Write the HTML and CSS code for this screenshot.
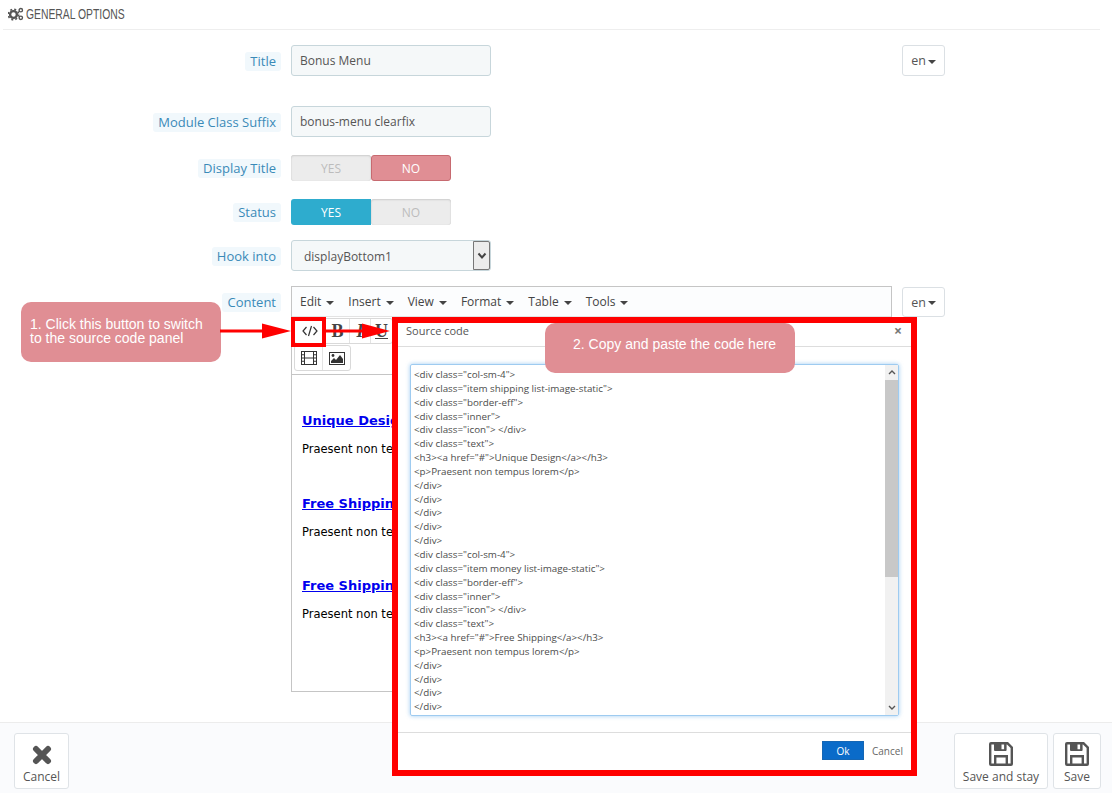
FILE: index.html
```html
<!DOCTYPE html>
<html lang="en">
<head>
<meta charset="utf-8">
<title>General options</title>
<link rel="stylesheet" href="styles.css">
</head>
<body>
<div class="page">
  <header class="panel-head">
    <svg class="gears" viewBox="0 0 16 14" width="16" height="14"><circle cx="5.5" cy="7.5" r="3.4" fill="none" stroke="#555" stroke-width="2.4"/><circle cx="5.5" cy="7.5" r="5.2" fill="none" stroke="#555" stroke-width="1.6" stroke-dasharray="2 2.1"/><circle cx="12.8" cy="3.2" r="1.7" fill="none" stroke="#555" stroke-width="1.4"/><circle cx="12.8" cy="10.8" r="1.7" fill="none" stroke="#555" stroke-width="1.4"/></svg>
    <span class="panel-title">GENERAL OPTIONS</span>
  </header>

  <div class="form">
    <div class="row row-title">
      <div class="label-col"><span class="label">Title</span></div>
      <div class="input">Bonus Menu</div>
      <button class="lang lang-title">en<i class="caret"></i></button>
    </div>
    <div class="row row-suffix">
      <div class="label-col"><span class="label">Module Class Suffix</span></div>
      <div class="input">bonus-menu clearfix</div>
    </div>
    <div class="row row-display">
      <div class="label-col"><span class="label">Display Title</span></div>
      <div class="toggle"><span class="seg off">YES</span><span class="seg no">NO</span></div>
    </div>
    <div class="row row-status">
      <div class="label-col"><span class="label">Status</span></div>
      <div class="toggle"><span class="seg yes">YES</span><span class="seg off">NO</span></div>
    </div>
    <div class="row row-hook">
      <div class="label-col"><span class="label">Hook into</span></div>
      <div class="select"><span class="select-val">displayBottom1</span><span class="select-btn"><svg viewBox="0 0 10 8" width="10" height="8"><path d="M1.5 1.5 5 5.5 8.5 1.5" fill="none" stroke="#444" stroke-width="2"/></svg></span></div>
    </div>
    <div class="row row-content">
      <div class="label-col"><span class="label">Content</span></div>
      <div class="editor">
        <div class="menubar">
          <span class="menu">Edit<i class="caret"></i></span>
          <span class="menu">Insert<i class="caret"></i></span>
          <span class="menu">View<i class="caret"></i></span>
          <span class="menu">Format<i class="caret"></i></span>
          <span class="menu">Table<i class="caret"></i></span>
          <span class="menu">Tools<i class="caret"></i></span>
        </div>
        <div class="toolbar">
          <div class="tool-group">
            <span class="tool tool-code"><svg viewBox="0 0 16 12" width="16" height="12"><path d="M4.5 2 1 6l3.5 4M11.5 2 15 6l-3.5 4M9.5 1 6.5 11" fill="none" stroke="#333" stroke-width="1.2"/></svg></span>
            <span class="tool tool-b">B</span>
            <span class="tool tool-i">I</span>
            <span class="tool tool-u">U</span>
          </div>
          <div class="tool-group">
            <span class="tool"><svg viewBox="0 0 16 14" width="16" height="14"><path fill="#333" fill-rule="evenodd" d="M0 0h16v14H0zM1 1v2.2h2V1zM13 1v2.2h2V1zM4 1v5.4h8V1zM1 4.2v2.2h2V4.2zM13 4.2v2.2h2V4.2zM1 7.5v2.2h2V7.5zM13 7.5v2.2h2V7.5zM4 7.5V13h8V7.5zM1 10.8V13h2v-2.2zM13 10.8V13h2v-2.2z"/></svg></span>
            <span class="tool"><svg viewBox="0 0 16 13" width="16" height="13"><path fill="#333" fill-rule="evenodd" d="M0 0h16v13H0zM1 1v11h14V1z"/><path fill="#333" d="M2 11V9l3-3 2 2 4-5 3 4v4z"/><circle cx="4" cy="3.5" r="1.4" fill="#333"/></svg></span>
          </div>
        </div>
        <div class="editor-body">
          <h3 class="ed-h"><a href="#">Unique Design</a></h3>
          <p class="ed-p">Praesent non tempus lorem</p>
          <h3 class="ed-h"><a href="#">Free Shipping</a></h3>
          <p class="ed-p">Praesent non tempus lorem</p>
          <h3 class="ed-h"><a href="#">Free Shipping</a></h3>
          <p class="ed-p">Praesent non tempus lorem</p>
        </div>
      </div>
      <button class="lang lang-content">en<i class="caret"></i></button>
    </div>
  </div>

  <footer class="footer">
    <button class="act act-cancel">
      <svg viewBox="0 0 20 20" width="20" height="20"><path d="M4 4 16 16M16 4 4 16" stroke="#555" stroke-width="6" stroke-linecap="round" stroke-linejoin="round"/></svg>
      <span>Cancel</span>
    </button>
    <button class="act act-stay">
      <svg viewBox="0 0 24 24" width="24" height="24"><use href="#floppy"/></svg>
      <span>Save and stay</span>
    </button>
    <button class="act act-save">
      <svg viewBox="0 0 24 24" width="24" height="24"><use href="#floppy"/></svg>
      <span>Save</span>
    </button>
  </footer>
</div>

<svg class="defs" width="0" height="0"><defs><symbol id="floppy" viewBox="0 0 24 24"><path fill="#555" fill-rule="evenodd" d="M2 0h17l5 5v17a2 2 0 0 1-2 2H2a2 2 0 0 1-2-2V2a2 2 0 0 1 2-2zM2.400 2.400v19.200h2.600V13h14v8.600h2.600V6l-3.600-3.600h-.4V8a1 1 0 0 1-1 1H6a1 1 0 0 1-1-1V2.400zM7.400 15.400v6.200h9.200v-6.200zM12.500 2.400v4.800h2.600V2.400z"/></symbol></defs></svg>

<section class="dialog">
  <div class="dlg-head"><span class="dlg-title">Source code</span><span class="dlg-close">×</span></div>
  <div class="dlg-body">
    <div class="code">
      <div class="code-text">&lt;div class="col-sm-4"&gt;
&lt;div class="item shipping list-image-static"&gt;
&lt;div class="border-eff"&gt;
&lt;div class="inner"&gt;
&lt;div class="icon"&gt; &lt;/div&gt;
&lt;div class="text"&gt;
&lt;h3&gt;&lt;a href="#"&gt;Unique Design&lt;/a&gt;&lt;/h3&gt;
&lt;p&gt;Praesent non tempus lorem&lt;/p&gt;
&lt;/div&gt;
&lt;/div&gt;
&lt;/div&gt;
&lt;/div&gt;
&lt;/div&gt;
&lt;div class="col-sm-4"&gt;
&lt;div class="item money list-image-static"&gt;
&lt;div class="border-eff"&gt;
&lt;div class="inner"&gt;
&lt;div class="icon"&gt; &lt;/div&gt;
&lt;div class="text"&gt;
&lt;h3&gt;&lt;a href="#"&gt;Free Shipping&lt;/a&gt;&lt;/h3&gt;
&lt;p&gt;Praesent non tempus lorem&lt;/p&gt;
&lt;/div&gt;
&lt;/div&gt;
&lt;/div&gt;
&lt;/div&gt;</div>
      <div class="sbar">
        <svg class="sb-arrow" viewBox="0 0 8 5" width="8" height="5"><path d="M1 4 4 1l3 3" fill="none" stroke="#555" stroke-width="1.400"/></svg>
        <div class="sb-track"><div class="sb-thumb"></div></div>
        <svg class="sb-arrow" viewBox="0 0 8 5" width="8" height="5"><path d="M1 1l3 3 3-3" fill="none" stroke="#555" stroke-width="1.400"/></svg>
      </div>
    </div>
  </div>
  <div class="dlg-foot"><button class="ok">Ok</button><span class="dlg-cancel">Cancel</span></div>
</section>

<div class="callout callout-1">1. Click this button to switch<br>to the source code panel</div>
<div class="callout callout-2">2. Copy and paste the code here</div>
<div class="code-mark"></div>
<svg class="arrows" viewBox="0 0 180 20" width="180" height="20">
  <path d="M0 10h50" stroke="#f00" stroke-width="3"/>
  <path d="M42 2.500 71 10 42 17.500z" fill="#f00"/>
  <path d="M105 10h40" stroke="#f00" stroke-width="3"/>
  <path d="M142 2.500 170 10 142 17.500z" fill="#f00"/>
</svg>
</body>
</html>
```
FILE: styles.css
```css
* { box-sizing: border-box; }
html, body { margin: 0; height: 793px; overflow: hidden; background: #fff; }
body { font-family: "Open Sans", "Liberation Sans", sans-serif; font-size: 13px; color: #555; position: relative; }
button { font-family: inherit; }

.page { width: 1112px; height: 793px; display: flex; flex-direction: column; }

.panel-head { height: 30px; margin: 0 12px 0 3px; padding: 0 0 1px 5px; border-bottom: 1px solid #eee; display: flex; align-items: center; gap: 2px; }
.gears { flex: none; margin-top: -1px; }
.panel-title { font-family: "Liberation Sans", sans-serif; font-size: 14px; color: #555; display: inline-block; transform: scaleX(.74); transform-origin: left center; white-space: nowrap; }

.form { flex: 1; padding-top: 15px; }
.row { display: flex; align-items: flex-start; }
.label-col { width: 281px; flex: none; margin-right: 10px; text-align: right; }
.label { display: inline-block; background: #f1f8fc; color: #3a8ab8; padding: 0 5px; border-radius: 3px; font-size: 13px; line-height: 19px; }

.row-title { height: 61px; }
.row-suffix { height: 49px; }
.row-display { height: 44px; }
.row-status { height: 41px; }
.row-hook { height: 46px; }
.row-title .label-col, .row-suffix .label-col { padding-top: 7px; }
.row-display .label-col, .row-status .label-col { padding-top: 4px; }
.row-hook .label-col { padding-top: 7px; }
.row-content .label-col { padding-top: 7px; }

.input { width: 200px; height: 31px; background: #f5f8f9; border: 1px solid #c7d6db; border-radius: 3px; padding: 0 8px; line-height: 29px; color: #555; font-size: 12px; }

.lang { margin-left: 411px; width: 43px; height: 31px; background: #fff; border: 1px solid #dbe0e4; border-radius: 3px; color: #555; font-size: 12.500px; padding: 0; }
.lang-content { margin-left: 10px; height: 30px; margin-top: 1px; }
.caret { display: inline-block; width: 0; height: 0; margin-left: 2px; vertical-align: middle; border-top: 4px solid #444; border-left: 4.500px solid transparent; border-right: 4.500px solid transparent; }

.toggle { width: 160px; height: 26px; display: flex; }
.seg { flex: 0 0 80px; text-align: center; line-height: 27px; font-size: 12px; border-radius: 0; }
.seg.off { background: #ececec; color: #bcbcbc; box-shadow: inset 0 1px 2px rgba(0,0,0,.12), inset 0 0 1px rgba(0,0,0,.15); border-radius: 3px; }
.seg.no { background: #e08e94; color: #fff; border: 1px solid #c76a70; line-height: 25px; border-radius: 3px; }
.seg.yes { background: #2eacce; color: #fff; border-radius: 3px 0 0 3px; }

.select { width: 200px; height: 31px; background: #f5f8f9; border: 1px solid #c7d6db; border-radius: 3px; display: flex; justify-content: space-between; }
.select-val { padding-left: 12px; line-height: 31px; font-size: 12px; }
.select-btn { width: 17px; background: #ececec; border: 1px solid #777; border-radius: 0 2px 2px 0; display: flex; align-items: center; justify-content: center; }

.editor { width: 601px; height: 406px; border: 1px solid #c5c5c5; margin-top: 0; display: flex; flex-direction: column; }
.menubar { height: 30px; padding: 0 0 0 8px; display: flex; align-items: center; gap: 14px; background: #fcfdfe; border-bottom: 1px solid #e3e3e3; }
.menu { font-size: 12px; color: #444; }
.menu .caret { margin-left: 5px; }
.toolbar { height: 58px; padding: 1px 2px; display: flex; flex-direction: column; gap: 1px; border-bottom: 1px solid #c5c5c5; }
.tool-group { display: flex; align-self: flex-start; height: 26px; border: 1px solid #d9d9d9; border-radius: 3px; background: #fff; }
.tool { width: 28px; display: flex; align-items: center; justify-content: center; border-left: 1px solid #e3e3e3; color: #333; }
.tool:first-child { border-left: 0; width: 27px; }
.tool-code { flex: none; }
.tool-group:first-child .tool-code { width: 30px; }
.tool-b, .tool-i, .tool-u { font-family: "Liberation Serif", serif; font-size: 18px; font-weight: 700; width: 24px; color: #444; }
.tool-i { font-style: italic; width: 21px; }
.tool-u { text-decoration: underline; width: 22px; }
.editor-body { white-space: nowrap; padding: 38px 10px 0; font-family: "DejaVu Sans", sans-serif; color: #000; }
.ed-h { margin: 0 0 13px; font-size: 13px; line-height: 16px; font-weight: 700; }
.ed-h a { color: #00e; }
.ed-p { margin: 0 0 39.500px; font-size: 11.500px; line-height: 14px; }

.footer { height: 71px; background: #fafbfd; border-top: 1px solid #ececec; padding: 10px 11px 4px 14px; display: flex; gap: 5px; }
.act { height: 56px; background: #fff; border: 1px solid #dfe3e7; border-radius: 3px; display: flex; flex-direction: column; align-items: center; justify-content: flex-start; padding: 8px 0 0; gap: 2px; color: #555; font-size: 12px; line-height: 18px; }
.act-cancel { width: 55px; margin-right: auto; }
.act-cancel svg { margin-top: 3px; margin-bottom: 1px; }
.act-stay { width: 94px; }
.act-save { width: 48px; }

.defs { position: absolute; }

.dialog { position: absolute; left: 392px; top: 317px; width: 525px; height: 459px; background: #fff; border: 6px solid #f00; display: flex; flex-direction: column; }
.dlg-head { height: 24px; flex: none; border-bottom: 1px solid #ddd; padding: 0 9px 8px 8px; display: flex; justify-content: space-between; align-items: center; font-size: 11px; }
.dlg-title { color: #555; }
.dlg-close { color: #777; font-weight: 700; font-size: 14px; }
.dlg-body { flex: none; height: 386px; padding: 17px 13px 0 12px; border-bottom: 1px solid #ddd; }
.code { height: 352px; width: 489px; border: 1px solid #9ecbf0; border-radius: 2px; box-shadow: 0 0 4px rgba(80,160,230,.55); display: flex; overflow: hidden; }
.code-text { flex: 1; white-space: pre; padding: 3px 0 0 3px; font-size: 9.800px; line-height: 13.850px; color: #4c4c4c; overflow: hidden; }
.sbar { width: 13px; flex: none; background: #f1f1f1; display: flex; flex-direction: column; align-items: center; }
.sb-arrow { flex: none; margin: 5px 0; }
.sb-track { flex: 1; width: 100%; }
.sb-thumb { width: 100%; height: 197px; background: #c8c8c8; }
.dlg-foot { flex: 1; display: flex; align-items: center; justify-content: flex-end; padding: 0 7px 2px 0; gap: 8px; }
.ok { width: 42px; height: 19px; background: #0a6bc9; color: #fff; border: 1px solid #1566b4; font-size: 10px; padding: 0; }
.dlg-cancel { font-size: 10px; color: #666; width: 32px; }

.callout { position: absolute; background: #e08e94; color: #fff; font-family: "Liberation Sans", sans-serif; border-radius: 10px; }
.callout-1 { left: 21px; top: 302px; width: 200px; height: 60px; padding: 15px 0 0 9px; font-size: 14px; line-height: 14px; }
.callout-2 { left: 545px; top: 323px; width: 250px; height: 50px; padding: 13px 0 0 28px; font-size: 14px; line-height: 16px; }
.code-mark { position: absolute; left: 291px; top: 317px; width: 35px; height: 30px; border: 4px solid #f00; }
.arrows { position: absolute; left: 220px; top: 320.500px; }
```
